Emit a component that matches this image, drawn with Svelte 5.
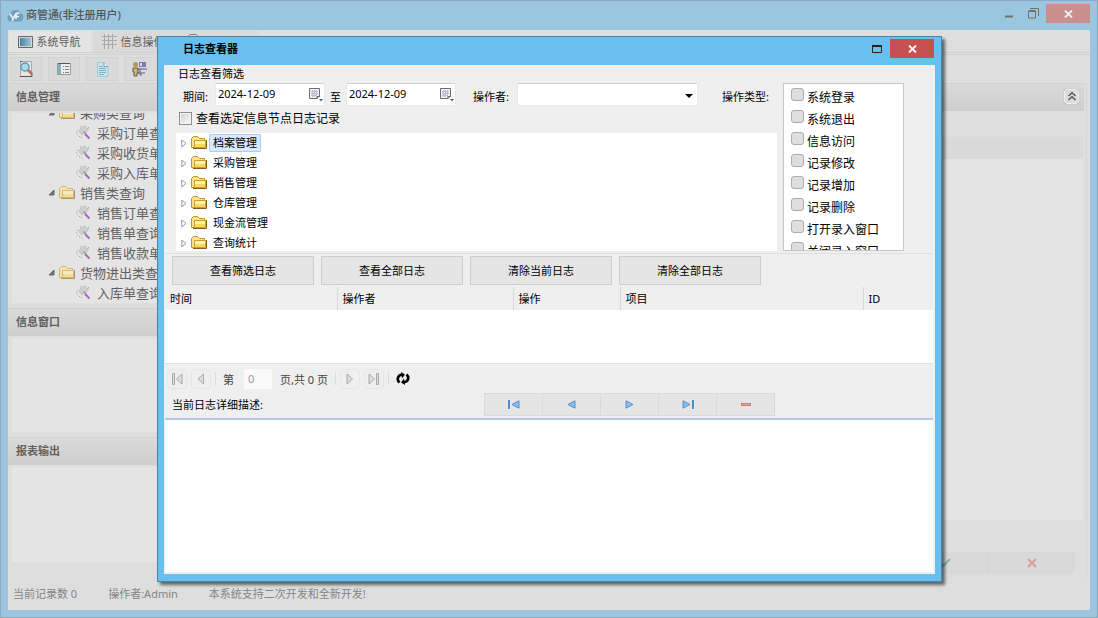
<script>
  const navTree = [
    { label: '采购类查询', group: true },
    { label: '采购订单查询' },
    { label: '采购收货单查询' },
    { label: '采购入库单查询' },
    { label: '销售类查询', group: true },
    { label: '销售订单查询' },
    { label: '销售单查询' },
    { label: '销售收款单查询' },
    { label: '货物进出类查询', group: true },
    { label: '入库单查询' }
  ];
  const nodes = ['档案管理', '采购管理', '销售管理', '仓库管理', '现金流管理', '查询统计'];
  const types = ['系统登录', '系统退出', '信息访问', '记录修改', '记录增加', '记录删除', '打开录入窗口', '关闭录入窗口'];
  const actions = ['查看筛选日志', '查看全部日志', '清除当前日志', '清除全部日志'];
  const columns = ['时间', '操作者', '操作', '项目', 'ID'];
  let selected = $state('档案管理');
  let from = $state('2024-12-09');
  let to = $state('2024-12-09');
</script>

{#snippet folder()}
  <svg class="folder" width="17" height="14" viewBox="0 0 17 14" aria-hidden="true">
    <path d="M.5 11.500V2.500L2.500 .5H6.500L8.500 2.500H13.500V11.500Z" fill="#ffe48a" stroke="#c79322" />
    <path d="M3.500 4.500H14.500V11.500H3.500Z" fill="#fbd85e" stroke="#cf9c2a" />
    <path d="M4 5H14V8H4Z" fill="#fff3b0" />
    <path d="M2 12.500H15.500V4" fill="none" stroke="#80611d" />
  </svg>
{/snippet}

{#snippet calendar()}
  <svg width="15" height="15" viewBox="0 0 15 15" aria-hidden="true">
    <path d="M1.500 1.500H11.500V9L9 11.500H1.500Z" fill="#f3f4f6" stroke="#74696a" />
    <path d="M3 4.500H10M3 6.500H10M3 8.500H9M4.500 3V10M6.500 3V10M8.500 3V10" stroke="#b4c0cf" />
    <path d="M9 12V9.500H12" fill="none" stroke="#74696a" />
    <path d="M11 12H15L13 14.500Z" fill="#38659f" />
  </svg>
{/snippet}

<div class="window">
  <header class="titlebar">
    <svg width="17" height="14" viewBox="0 0 17 14" aria-hidden="true">
      <path d="M4 12.500C1 12.500 0 10 .6 8C1 6 3 5.500 3.500 5C4.500 1.500 7 .5 9 1C11 .8 12.500 2.500 13 4C16 4.500 17 7 16.200 9.500C15.500 12 14 12.500 12 12.500Z" fill="#739fbb" />
      <path d="M3 5L6 9.500M9 4.500L5 12M9 10V6C9 4 11 3.500 12.500 4.500M8 7.500H12" fill="none" stroke="#e9f0f4" stroke-width="1.600" />
    </svg>
    <h1>商管通(非注册用户)</h1>
    <div class="controls">
      <button aria-label="最小化"><svg width="9" height="9" viewBox="0 0 9 9"><path d="M0 7.500H8" stroke="#73716f" stroke-width="2" /></svg></button>
      <button aria-label="还原"><svg width="11" height="11" viewBox="0 0 11 11"><path d="M2 .5H10.500V8M.5 3.500H7.500V10H.5Z" fill="none" stroke="#73716f" /><path d="M.5 3H7.500" stroke="#73716f" stroke-width="2" /></svg></button>
      <button class="close faded" aria-label="关闭"><svg width="9" height="8" viewBox="0 0 9 8"><path d="M1 .5L8 7.500M8 .5L1 7.500" stroke="#eee" stroke-width="1.800" /></svg></button>
    </div>
  </header>

  <div class="workspace">
    <nav class="tabs">
      <button class="tab active">
        <svg width="15" height="12" viewBox="0 0 15 12" aria-hidden="true"><defs><linearGradient id="screen"><stop stop-color="#4e829f" /><stop offset="1" stop-color="#a2c4d4" /></linearGradient></defs><path d="M.5 .5H14.500V11.500H.5Z" fill="#d3dadd" stroke="#686868" /><path d="M2 2H13V10H2Z" fill="url(#screen)" /></svg>
        系统导航
      </button>
      <button class="tab">
        <svg width="15" height="15" viewBox="0 0 15 15" aria-hidden="true"><path d="M2.500 0V15M6.500 0V15M10.500 0V15M0 2.500H15M0 6.500H15M0 10.500H15" stroke="#aaa" /></svg>
        信息操作
      </button>
      <button class="tab" aria-label="报表"><svg width="13" height="15" viewBox="0 0 13 15"><path d="M1.500 2.500L3 .5H9L11.500 3V14H1.500Z" fill="#e3dcd4" stroke="#817770" /></svg></button>
    </nav>

    <div class="toolbar">
      <button aria-label="查找"><svg width="16" height="18" viewBox="0 0 16 18"><path d="M2.500 1.500H13.500V16.500H2.500Z" fill="#e6e6e5" stroke="#aaa" /><path d="M2 1.500H4M2 16.500H14V14" fill="none" stroke="#555" /><circle cx="7" cy="7" r="4" fill="#a9dbe9" stroke="#5b9db7" stroke-width="1.500" /><path d="M10 10L14 14" stroke="#bd7656" stroke-width="3" /></svg></button>
      <button aria-label="列表"><svg width="14" height="14" viewBox="0 0 14 14"><path d="M.5 1.500H13.500V12.500H.5Z" fill="#eee" stroke="#999" /><path d="M1 2H4V12H1Z" fill="#83b1c5" /><path d="M1 1.500H13" stroke="#555" /><path d="M6 4.500H7M8 4.500H12M6 7.500H7M8 7.500H12M6 10.500H7M8 10.500H12" stroke="#808080" /></svg></button>
      <button aria-label="文档"><svg width="13" height="15" viewBox="0 0 13 15"><path d="M1.500 .5H8L12 4.500V14.500H1.500Z" fill="#cae4ee" stroke="#9bc8da" /><path d="M8 .5V4.500H12" fill="#edf7fa" stroke="#759eae" /><path d="M3 4.500H7M3 6.500H10M3 8.500H10M3 10.500H10M3 12.500H8" stroke="#78b3cb" /></svg></button>
      <button aria-label="用户"><svg width="16" height="16" viewBox="0 0 16 16"><path d="M7 1H14V6H7Z" fill="#7f78b8" /><path d="M8 2H10V5H8Z" fill="#ddd" /><path d="M6 8H15M6 12H13" stroke="#9996b3" stroke-width="2" /><circle cx="3.500" cy="3.500" r="2.500" fill="#b79554" /><path d="M1 7H6V12H5V15H2V11H1Z" fill="#d0b476" stroke="#635846" /><path d="M8 8V14H10" fill="none" stroke="#666" /></svg></button>
    </div>

    <div class="columns">
      <aside class="sidebar">
        <h2 class="section">信息管理</h2>
        <div class="panel large">
          {#each navTree as item}
            <div class="nav-row" class:group={item.group}>
              {#if item.group}
                <svg width="7" height="7" viewBox="0 0 7 7" aria-hidden="true"><path d="M6 1V6H1Z" fill="#777" stroke="#666" /></svg>
                {@render folder()}
              {:else}
                <svg width="15" height="15" viewBox="0 0 15 15" aria-hidden="true">
                  <path d="M5 3L7 2L9 1L10 3L13 4L11 6L10 8L8 7L6 10L4 8L3 6Z" fill="#cecece" stroke="#c2c2c2" />
                  <path d="M4 1.500H5M1 5.500H2M0 7.500H1M1 9.500H2M3 11.500H4M5 12.500H6M12 2.500H13" stroke="#aaa" />
                  <path d="M7.500 6.500L10 9" stroke="#999" stroke-width="1.500" />
                  <path d="M9 9L13.500 13.500" stroke="#9b6abd" stroke-width="1.800" />
                </svg>
              {/if}
              <span>{item.label}</span>
            </div>
          {/each}
        </div>
        <h2 class="section">信息窗口</h2>
        <div class="panel"></div>
        <h2 class="section">报表输出</h2>
        <div class="panel"></div>
      </aside>

      <main class="content">
        <div class="section bar">
          <button class="collapse" aria-label="折叠"><svg width="8" height="9" viewBox="0 0 8 9"><path d="M.5 4L4 .8L7.500 4M.5 8L4 4.800L7.500 8" fill="none" stroke="#555" stroke-width="1.500" /></svg></button>
        </div>
        <div class="sheet"></div>
        <div class="confirm">
          <button aria-label="确定"><svg width="12" height="10" viewBox="0 0 12 10"><path d="M1 5L4 8L11 1" fill="none" stroke="#94b39e" stroke-width="2" /></svg></button>
          <button aria-label="取消"><svg width="10" height="10" viewBox="0 0 10 10"><path d="M1 1L9 9M9 1L1 9" stroke="#d99d99" stroke-width="2" /></svg></button>
        </div>
      </main>
    </div>

    <footer class="status">
      <span>当前记录数 0</span>
      <span>操作者:Admin</span>
      <span>本系统支持二次开发和全新开发!</span>
    </footer>
  </div>
</div>

<div class="dialog" role="dialog" aria-labelledby="dialog-title">
  <header class="dialog-title">
    <h2 id="dialog-title">日志查看器</h2>
    <div class="controls">
      <button aria-label="最大化"><svg width="10" height="8" viewBox="0 0 10 8"><path d="M.5 .5H9.500V7.500H.5Z" fill="none" stroke="#222" /><path d="M0 1H10" stroke="#222" stroke-width="2" /></svg></button>
      <button class="close" aria-label="关闭"><svg width="9" height="8" viewBox="0 0 9 8"><path d="M1 .5L8 7.500M8 .5L1 7.500" stroke="#fff" stroke-width="1.800" /></svg></button>
    </div>
  </header>

  <div class="dialog-body">
    <p class="legend">日志查看筛选</p>
    <div class="filter">
      <div class="filter-left">
        <div class="fields">
          <label class="period-label" for="from">期间:</label>
          <div class="date"><input id="from" type="text" bind:value={from} /><button aria-label="选择开始日期">{@render calendar()}</button></div>
          <label for="to">至</label>
          <div class="date"><input id="to" type="text" bind:value={to} /><button aria-label="选择结束日期">{@render calendar()}</button></div>
          <label class="operator-label" for="operator">操作者:</label>
          <div class="select">
            <select id="operator"><option></option></select>
            <svg width="8" height="4" viewBox="0 0 8 4" aria-hidden="true"><path d="M0 0H8L4 4Z" fill="#000" /></svg>
          </div>
          <span class="type-label" id="types">操作类型:</span>
        </div>
        <label class="node-check"><input type="checkbox" />查看选定信息节点日志记录</label>
        <div class="tree">
          {#each nodes as node}
            <div class="tree-row">
              <svg width="6" height="9" viewBox="0 0 6 9" aria-hidden="true"><path d="M.8 1L5 4.500L.8 8Z" fill="#fff" stroke="#999" /></svg>
              {@render folder()}
              <button class:selected={selected === node} onclick={() => (selected = node)}>{node}</button>
            </div>
          {/each}
        </div>
      </div>
      <div class="types" role="group" aria-labelledby="types">
        {#each types as type}
          <label><input type="checkbox" /><span>{type}</span></label>
        {/each}
      </div>
    </div>

    <div class="actions">
      {#each actions as action}<button>{action}</button>{/each}
    </div>

    <table>
      <thead><tr>{#each columns as column}<th scope="col">{column}</th>{/each}</tr></thead>
      <tbody><tr><td colspan="5"></td></tr></tbody>
    </table>

    <div class="pager">
      <button aria-label="首页"><svg width="11" height="12" viewBox="0 0 11 12"><path d="M.5 .5H2.500V11.500H.5Z" fill="#ddd" stroke="#aaa" /><path d="M10 1V11L4.500 6Z" fill="#ddd" stroke="#aaa" /></svg></button>
      <button aria-label="上一页"><svg width="8" height="12" viewBox="0 0 8 12"><path d="M6.500 1V11L1 6Z" fill="#ddd" stroke="#aaa" /></svg></button>
      <i></i>
      <label for="page">第</label>
      <input id="page" type="text" value="0" />
      <span>页,共 0 页</span>
      <i></i>
      <button aria-label="下一页"><svg width="8" height="12" viewBox="0 0 8 12"><path d="M1 1V11L6.500 6Z" fill="#ddd" stroke="#aaa" /></svg></button>
      <button aria-label="末页"><svg width="11" height="12" viewBox="0 0 11 12"><path d="M8.500 .5H10.500V11.500H8.500Z" fill="#ddd" stroke="#aaa" /><path d="M1 1V11L6.500 6Z" fill="#ddd" stroke="#aaa" /></svg></button>
      <i></i>
      <button class="refresh" aria-label="刷新"><svg width="14" height="13" viewBox="0 0 14 13"><path d="M3.500 10.500C.5 8 1.500 3 6 2.800M10.500 2.500C13.500 5 12.500 10 8 10.200" fill="none" stroke="#000" stroke-width="2.600" /><path d="M5 0L9 2.500L6 6.500ZM9 13L5 10.500L8 6.500Z" /></svg></button>
    </div>

    <div class="detail-bar">
      <label for="detail">当前日志详细描述:</label>
      <div class="record-nav">
        <button aria-label="第一条"><svg width="12" height="9" viewBox="0 0 12 9"><path d="M1 0V9" stroke="#4b91d2" stroke-width="2" /><path d="M11 .8V8.200L4 4.500Z" fill="#8dbdeb" stroke="#5292cd" /></svg></button>
        <button aria-label="上一条"><svg width="9" height="9" viewBox="0 0 9 9"><path d="M8 .8V8.200L1 4.500Z" fill="#8dbdeb" stroke="#5292cd" /></svg></button>
        <button aria-label="下一条"><svg width="9" height="9" viewBox="0 0 9 9"><path d="M1 .8V8.200L8 4.500Z" fill="#8dbdeb" stroke="#5292cd" /></svg></button>
        <button aria-label="最后一条"><svg width="12" height="9" viewBox="0 0 12 9"><path d="M11 0V9" stroke="#4b91d2" stroke-width="2" /><path d="M1 .8V8.200L8 4.500Z" fill="#8dbdeb" stroke="#5292cd" /></svg></button>
        <button aria-label="删除"><svg width="10" height="3" viewBox="0 0 10 3"><path d="M0 0H10V3H0Z" fill="#e1745a" /><path d="M1 1.500H9" stroke="#f3a58f" /></svg></button>
      </div>
    </div>
    <textarea id="detail"></textarea>
  </div>
</div>

<style>
  :global(body) { background: #9bc6df; }
  .window, .dialog, button, input, select, textarea {
    box-sizing: border-box;
    font: 11px/16px "Noto Sans", "Noto Sans CJK SC", sans-serif;
    color: #000;
  }
  button { padding: 0; border: 0; background: none; display: flex; align-items: center; justify-content: center; }
  input, select, textarea { border: 0; margin: 0; padding: 0; border-radius: 0; outline: none; background: #fff; }
  h1, h2, p { margin: 0; font-size: 11px; line-height: 16px; }
  svg { flex: none; }

  .window {
    height: 100vh;
    display: flex;
    flex-direction: column;
    padding: 0 7px 7px;
    background: #9bc6df;
    border: 1px solid #8aabbd;
    color: #606060;
  }
  .titlebar { height: 29px; flex: none; display: flex; align-items: center; gap: 2px; margin-left: -1px; }
  .titlebar h1 { font-weight: 500; color: #555; padding-bottom: 2px; }
  .controls { margin-left: auto; display: flex; align-self: flex-start; }
  .controls button { width: 24px; height: 19px; }
  .titlebar .controls { margin-top: 3px; }
  .controls .close { width: 44px; margin-left: 1px; background: #c75050; }
  .controls .close.faded { background: #ca8e8d; }

  .workspace { flex: 1; min-height: 0; display: flex; flex-direction: column; background: #dedede; }
  .tabs { display: flex; gap: 2px; padding: 1px 1px 0; height: 21px; border-bottom: 1px solid #d2d2d2; }
  .tab { width: 82px; gap: 4px; padding-right: 2px; background: #dadada; color: #606060; overflow: hidden; white-space: nowrap; }
  .tab:last-child { justify-content: flex-start; padding-left: 10px; }
  .tab.active { background: #e4e4e4; }
  .toolbar { display: flex; gap: 6px; padding: 2px 2px; margin-top: 1px; border-top: 1px solid #d2d2d2; }
  .toolbar button { width: 32px; height: 24px; background: #dadada; border: 1px solid #d3d3d3; }
  .columns { flex: 1; min-height: 0; display: flex; }
  .section {
    flex: none;
    box-sizing: border-box;
    height: 28px;
    padding: 5px 8px;
    background: linear-gradient(#dadada, #cecece);
    border-top: 1px solid #d2d2d2;
    color: #606060;
  }
  .sidebar { width: 25%; display: flex; flex-direction: column; padding-bottom: 11px; }
  .panel { flex: 1 1 0; min-height: 0; margin: 2px 0 5px 4px; background: #e4e4e4; }
  .panel.large { flex-grow: 2; display: flex; flex-direction: column; justify-content: flex-end; overflow: hidden; }
  .nav-row { flex: none; height: 20px; display: flex; align-items: center; gap: 6px; padding-left: 64px; font-size: 13px; line-height: 20px; white-space: nowrap; }
  .nav-row.group { padding-left: 36px; gap: 4px; }
  .nav-row .folder { opacity: .6; }
  .content { flex: 1; min-width: 0; display: flex; flex-direction: column; padding-right: 1px; margin-right: 3px; border-right: 1px solid #d5d5d5; }
  .bar { display: flex; justify-content: flex-end; padding: 5px; margin-right: 1px; }
  .collapse { width: 15px; height: 15px; border: 1px solid #eee; border-radius: 3px; background: #dcdcdc; box-shadow: 0 0 1px #888; }
  .sheet { flex: 1; margin: 26px 2px 0 0; background: #e4e4e4; border-top: 22px solid #dadada; border-bottom: 1px solid #e6e6e6; }
  .confirm { display: flex; justify-content: flex-end; padding: 32px 10px 4px 0; }
  .confirm button { width: 87px; height: 22px; background: #d9d9d9; border-left: 1px solid #d3d3d3; }
  .status { height: 32px; flex: none; display: flex; align-items: center; gap: 31px; padding: 0 5px; color: #858585; }

  .dialog {
    position: absolute;
    inset: 36px 156px 36px 157px;
    display: flex;
    flex-direction: column;
    padding: 0 6px 7px;
    background: #69c0f0;
    border: 1px solid #4785aa;
    box-shadow: 3px 3px 3px rgba(0, 0, 0, .55);
  }
  .dialog-title { height: 28px; flex: none; display: flex; padding: 0 1px 0 19px; }
  .dialog-title h2 { padding-top: 4px; }
  .dialog-title .controls { margin-top: 2px; }
  .dialog-body { flex: 1; min-height: 0; display: flex; flex-direction: column; background: #efefef; padding: 0 2px 2px 1px; }
  .legend { padding: 1px 13px; }
  .filter { display: flex; gap: 6px; padding: 0 29px 2px 11px; border-bottom: 1px solid #dfdfdf; }
  .filter-left { flex: 1; min-width: 0; }
  .fields { display: flex; align-items: center; height: 23px; gap: 5px; padding-left: 7px; white-space: nowrap; }
  .fields label, .fields > span { padding-top: 4px; }
  .date, .select { box-sizing: border-box; height: 23px; border: 1px solid #e8e8e8; border-top-color: #d0d0d0; border-radius: 2px; background: #fff; }
  .date { width: 110px; display: flex; align-items: center; }
  .date input { flex: 1; min-width: 0; height: 16px; margin-bottom: 2px; padding-left: 2px; }
  .date button { width: 16px; height: 20px; }
  .fields .period-label { padding-right: 2px; }
  .fields .operator-label { margin-left: 12px; }
  .select { position: relative; width: 181px; margin-left: 3px; }
  .select select { width: 100%; height: 20px; appearance: none; }
  .select svg { position: absolute; right: 4px; top: 10px; pointer-events: none; }
  .fields .type-label { margin-left: auto; padding-right: 8px; }
  input[type="checkbox"] { appearance: none; box-sizing: border-box; width: 13px; height: 13px; flex: none; }
  .node-check { display: flex; align-items: center; gap: 4px; height: 27px; box-sizing: border-box; padding: 0 0 2px 3px; font-size: 12px; }
  .node-check input { border: 1px solid #8e8f8f; background: linear-gradient(135deg, #cfd3d8, #f7f7f7); box-shadow: inset 0 0 0 1px #f4f4f4; }
  .tree { height: 118px; background: #fff; overflow: hidden; }
  .tree-row { height: 20px; display: flex; align-items: center; padding-left: 5px; gap: 4px; }
  .tree-row button { height: 18px; padding: 0 3px; margin-left: -3px; border: 1px solid transparent; border-radius: 1px; }
  .tree-row button.selected { background: #d9e8fb; border-color: #a9ccf3; }
  .types { width: 121px; height: 168px; box-sizing: border-box; overflow: hidden; background: #fff; border: 1px solid #c5c8cb; padding: 1px 7px; }
  .types label { display: flex; gap: 3px; height: 22px; font-size: 12px; line-height: 18px; white-space: nowrap; }
  .types input { margin-top: 3px; border: 1px solid #adadad; border-radius: 3px; background: #dedede; }
  .types span { padding-top: 4px; }

  .actions { display: flex; gap: 7px; padding: 2px 7px; }
  .actions button { width: 142px; height: 29px; border: 1px solid #cdcdcd; background: #e5e5e5; }
  table { width: 100%; table-layout: fixed; border-collapse: collapse; border-bottom: 1px solid #dedede; }
  th { box-sizing: border-box; height: 23px; padding: 0 5px; text-align: left; font-weight: 400; border-right: 1px solid #d9d9d9; }
  th:nth-child(1) { width: 172px; }
  th:nth-child(2) { width: 176px; }
  th:nth-child(3) { width: 107px; }
  th:last-child { width: 70px; border-right: 0; }
  td { height: 53px; padding: 0; background: #fff; }
  .pager { display: flex; align-items: center; gap: 4px; height: 29px; padding-left: 2px; color: #444; }
  .pager button { width: 20px; height: 20px; border: 1px solid #e6e6e6; border-radius: 4px; }
  .pager i { width: 1px; height: 13px; background: #dcdcdc; }
  .pager label { padding: 2px 6px 0 3px; color: #444; }
  .pager input { width: 28px; height: 20px; padding: 0 4px; color: #999; background: #fafafa; }
  .pager span { padding: 2px 3px 0 4px; }
  .pager .refresh { border: 0; }
  .detail-bar { display: flex; justify-content: space-between; padding: 0 158px 2px 7px; border-bottom: 2px solid #aacbe9; }
  .detail-bar label { padding-top: 4px; }
  .record-nav { display: flex; border-right: 1px solid #d8d8d8; }
  .record-nav button { width: 58px; height: 23px; background: #e5e5e5; border: 1px solid #dadada; border-right: 0; }
  textarea { flex: 1; min-height: 0; width: 100%; resize: none; }
</style>
